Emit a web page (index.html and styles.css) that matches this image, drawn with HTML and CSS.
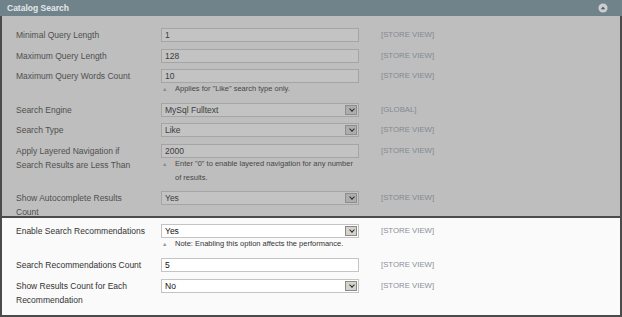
FILE: index.html
```html
<!DOCTYPE html>
<html>
<head>
    <title>Catalog Search</title>
    <link rel="stylesheet" href="styles.css">
</head>
<body>
    <div class="panel">
        <div class="panel-head">
            <span class="panel-title">Catalog Search</span>
            <span class="collapse">
                <svg width="10" height="10" viewBox="0 0 10 10"><circle cx="5" cy="5" r="4.6" fill="#c9ced0"/><path d="M2.8 6.2 L5 3.6 L7.2 6.2 Z" fill="#4d5b60"/></svg>
            </span>
        </div>

        <!-- dimmed part of the form -->
        <div class="section dim">
            <div class="row">
                <div class="label">Minimal Query Length</div>
                <div class="value"><div class="field text">1</div></div>
                <div class="scope">[STORE VIEW]</div>
            </div>
            <div class="row">
                <div class="label">Maximum Query Length</div>
                <div class="value"><div class="field text">128</div></div>
                <div class="scope">[STORE VIEW]</div>
            </div>
            <div class="row">
                <div class="label">Maximum Query Words Count</div>
                <div class="value">
                    <div class="field text">10</div>
                    <p class="note">Applies for "Like" search type only.</p>
                </div>
                <div class="scope">[STORE VIEW]</div>
            </div>
            <div class="row">
                <div class="label">Search Engine</div>
                <div class="value"><div class="field select"><span>MySql Fulltext</span><i class="arrow"></i></div></div>
                <div class="scope">[GLOBAL]</div>
            </div>
            <div class="row">
                <div class="label">Search Type</div>
                <div class="value"><div class="field select"><span>Like</span><i class="arrow"></i></div></div>
                <div class="scope">[STORE VIEW]</div>
            </div>
            <div class="row">
                <div class="label">Apply Layered Navigation if Search Results are Less Than</div>
                <div class="value">
                    <div class="field text">2000</div>
                    <p class="note">Enter "0" to enable layered navigation for any number of results.</p>
                </div>
                <div class="scope">[STORE VIEW]</div>
            </div>
            <div class="row">
                <div class="label">Show Autocomplete Results Count</div>
                <div class="value"><div class="field select"><span>Yes</span><i class="arrow"></i></div></div>
                <div class="scope">[STORE VIEW]</div>
            </div>
        </div>

        <!-- highlighted part -->
        <div class="section lit">
            <div class="row">
                <div class="label">Enable Search Recommendations</div>
                <div class="value">
                    <div class="field select"><span>Yes</span><i class="arrow"></i></div>
                    <p class="note">Note: Enabling this option affects the performance.</p>
                </div>
                <div class="scope">[STORE VIEW]</div>
            </div>
            <div class="row">
                <div class="label">Search Recommendations Count</div>
                <div class="value"><div class="field text">5</div></div>
                <div class="scope">[STORE VIEW]</div>
            </div>
            <div class="row">
                <div class="label">Show Results Count for Each Recommendation</div>
                <div class="value"><div class="field select"><span>No</span><i class="arrow"></i></div></div>
                <div class="scope">[STORE VIEW]</div>
            </div>
        </div>
    </div>
</body>
</html>
```

FILE: styles.css
```css
html, body { margin: 0; padding: 0; }
body {
    font-family: "Liberation Sans", Arial, sans-serif;
    background: #fafafa;
}
.panel {
    width: 622px;
    height: 317px;
    box-sizing: border-box;
    border: 2px solid #4b4b4b;
    border-top: none;
    display: flex;
    flex-direction: column;
}
.panel-head {
    height: 16px;
    background: #71838a;
    display: flex;
    align-items: center;
    justify-content: space-between;
    padding: 0 14px 0 7px;
    margin: 0 -2px;
}
.panel-title {
    color: #e3e8ea;
    font-weight: bold;
    font-size: 8.5px;
}
.collapse { display: flex; }
.section { padding-left: 14px; }
.dim {
    height: 200px;
    box-sizing: border-box;
    padding-top: 12px;
    background: #bebebe;
}
.dim .row { margin-bottom: 6.5px; }
.lit {
    flex: 1;
    padding-top: 6px;
    background: #fafafa;
    border-top: 2px solid #4b4b4b;
}
.row {
    display: grid;
    grid-template-columns: 145px 198px 1fr;
    align-items: start;
    margin-bottom: 7px;
}
.label {
    font-size: 8.5px;
    line-height: 14px;
    padding-right: 15px;
}
.field {
    height: 14px;
    box-sizing: border-box;
    border: 1px solid;
    font-size: 8.5px;
    line-height: 12px;
    padding-left: 3px;
    display: flex;
    align-items: center;
    justify-content: space-between;
}
.select { padding-right: 1px; }
.arrow {
    width: 12px;
    height: 10px;
    box-sizing: border-box;
    border: 1px solid;
    position: relative;
}
.arrow::after {
    content: "";
    position: absolute;
    left: 3.5px;
    top: 1px;
    width: 3px;
    height: 3px;
    border-right: 1.4px solid #2a2a2a;
    border-bottom: 1.4px solid #2a2a2a;
    transform: rotate(45deg);
}
.note {
    margin: -1px 0 0 0;
    font-size: 7.5px;
    line-height: 14px;
    padding-left: 14px;
    position: relative;
}
.note::before {
    content: "\25B2";
    position: absolute;
    left: 1px;
    top: 0;
    font-size: 5.5px;
    color: #999;
}
.scope {
    font-size: 7.8px;
    line-height: 14px;
    padding-left: 22px;
}

/* dimmed colours */
.dim .label { color: #505050; }
.dim .field { background: #c3c3c3; border-color: #a5a5a5; color: #3c3c3c; }
.dim .arrow { background: #adadad; border-color: #8e8e8e; }
.dim .note { color: #474747; }
.dim .note::before { color: #8c8c8c; }
.dim .scope { color: #828a8e; }

/* highlighted colours */
.lit .label { color: #333; }
.lit .field { background: #fff; border-color: #c4c4c4; color: #111; }
.lit .arrow { background: #d6d3cc; border-color: #8a8a8a; }
.lit .note { color: #333; }
.lit .scope { color: #8a8f98; }
```
